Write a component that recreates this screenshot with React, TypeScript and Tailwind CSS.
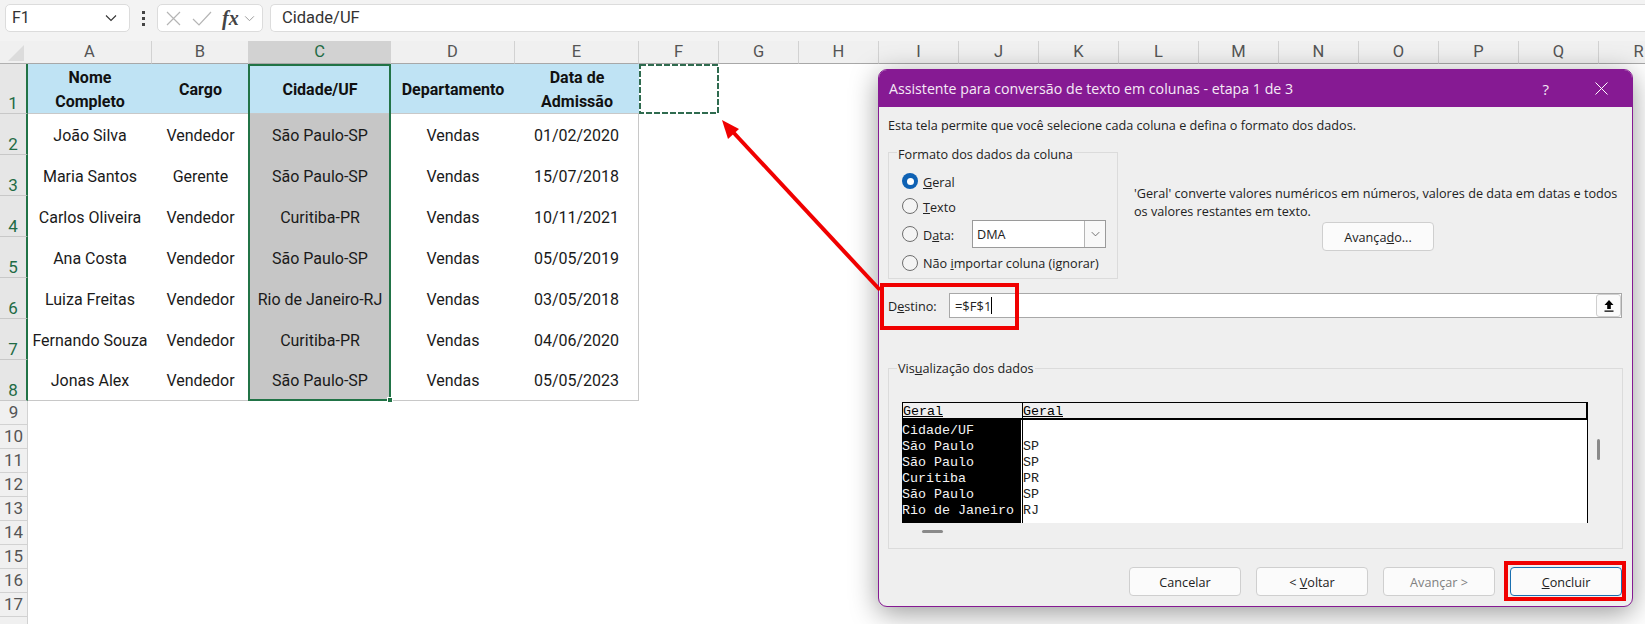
import React from "react";

const rows = [
  ["João Silva", "Vendedor", "São Paulo-SP", "Vendas", "01/02/2020"],
  ["Maria Santos", "Gerente", "São Paulo-SP", "Vendas", "15/07/2018"],
  ["Carlos Oliveira", "Vendedor", "Curitiba-PR", "Vendas", "10/11/2021"],
  ["Ana Costa", "Vendedor", "São Paulo-SP", "Vendas", "05/05/2019"],
  ["Luiza Freitas", "Vendedor", "Rio de Janeiro-RJ", "Vendas", "03/05/2018"],
  ["Fernando Souza", "Vendedor", "Curitiba-PR", "Vendas", "04/06/2020"],
  ["Jonas Alex", "Vendedor", "São Paulo-SP", "Vendas", "05/05/2023"],
];
const head = [["Nome", "Completo"], ["Cargo"], ["Cidade/UF"], ["Departamento"], ["Data de", "Admissão"]];
const letters = "ABCDEFGHIJKLMNOPQR".split("");
const smallRows = [9, 10, 11, 12, 13, 14, 15, 16, 17];

function Radio({ on }: { on?: boolean }) {
  return on ? (
    <span className="flex h-4 w-4 shrink-0 items-center justify-center rounded-full bg-[#0f62b4]">
      <span className="h-[7px] w-[7px] rounded-full bg-white" />
    </span>
  ) : (
    <span className="h-4 w-4 shrink-0 rounded-full border border-[#6e6e6e] bg-[#f4f4f4]" />
  );
}

function Btn({ children, cls = "" }: { children: React.ReactNode; cls?: string }) {
  return (
    <div className={`flex h-[29px] w-[112px] items-center justify-center rounded-[4px] border border-[#cfcfcf] bg-[#fbfbfb] ${cls}`}>
      {children}
    </div>
  );
}

function Chevron({ cls = "" }: { cls?: string }) {
  return (
    <svg viewBox="0 0 12 8" className={cls} fill="none" stroke="currentColor" strokeWidth="1.1">
      <path d="M1 1.5 6 6.5 11 1.5" />
    </svg>
  );
}

export default function App() {
  return (
    <div className="relative h-[624px] w-[1645px] overflow-hidden bg-white font-['Roboto',sans-serif] text-[#1a1a1a]">
      {/* formula bar */}
      <div className="flex h-[41px] items-start bg-[#f3f3f3] pl-[5px] pt-1">
        <div className="flex h-[28px] w-[125px] items-center justify-between rounded-[5px] border border-[#dcdcdc] bg-white pl-1.5 pr-3 text-[16px] text-[#333]">
          F1
          <Chevron cls="h-[8px] w-[12px] text-[#333]" />
        </div>
        <div className="flex h-[28px] w-[27px] flex-col items-center justify-center gap-[3px]">
          <span className="h-[3px] w-[3px] bg-[#444]" />
          <span className="h-[3px] w-[3px] bg-[#444]" />
          <span className="h-[3px] w-[3px] bg-[#444]" />
        </div>
        <div className="flex h-[28px] w-[106px] items-center rounded-[5px] border border-[#dcdcdc] bg-white pl-2">
          <svg viewBox="0 0 15 15" className="h-[15px] w-[15px] text-[#b5b5b5]" fill="none" stroke="currentColor" strokeWidth="1.2">
            <path d="M1 1 14 14M14 1 1 14" />
          </svg>
          <svg viewBox="0 0 20 15" className="ml-[11px] h-[15px] w-[20px] text-[#b5b5b5]" fill="none" stroke="currentColor" strokeWidth="1.2">
            <path d="M1 8 7 14 19 1" />
          </svg>
          <span className="ml-[10px] font-['Liberation_Serif',serif] text-[20px] font-bold italic leading-none text-[#444]">fx</span>
          <Chevron cls="ml-[5px] h-[7px] w-[11px] text-[#999]" />
        </div>
        <div className="ml-[7px] flex h-[28px] flex-1 items-center rounded-l-[5px] border-y border-l border-[#dcdcdc] bg-white pl-[11px] text-[16.5px] text-[#333]">
          Cidade/UF
        </div>
      </div>

      {/* sheet */}
      <div className="grid grid-cols-[28px_124px_97px_142px_124px_124px_80px_80px_80px_80px_80px_80px_80px_80px_80px_80px_80px_80px_80px] grid-rows-[23px_50px_41px_41px_41px_41px_41px_41px_41px_24px_24px_24px_24px_24px_24px_24px_24px_24px_24px]">
        <div className="relative border-b border-[#b0b0b0] bg-[#f0f0f0]">
          <svg viewBox="0 0 16 16" className="absolute left-[8px] top-[4px] h-4 w-4 text-[#dcdcdc]" fill="currentColor">
            <path d="M16 0V16H0Z" />
          </svg>
        </div>
        {letters.map((l) => (
          <div
            key={l}
            className={`flex items-center justify-center border-b border-r border-[#d2d2d2] border-b-[#a8a8a8] text-[16.5px] ${
              l === "C" ? "bg-[#d2d2d2] text-[#1f6b45]" : "bg-[#f0f0f0] text-[#555]"
            }`}
          >
            {l}
          </div>
        ))}

        {/* row 1 */}
        <div className="flex items-end justify-center border-b border-r-2 border-[#c8c8c8] border-r-[#217346] bg-[#e6e6e6] text-[17px] leading-[20px] text-[#1f6b45]">1</div>
        {head.map((h, i) => (
          <div
            key={i}
            style={{ gridRowStart: 2, gridColumnStart: i + 2 }}
            className="flex flex-col items-center justify-center border-b border-[#c8c8c8] bg-[#bfe3f4] pt-[2px] text-[16px] font-bold leading-[24px] text-[#111]"
          >
            {h.map((t) => (
              <span key={t}>{t}</span>
            ))}
          </div>
        ))}
        <div className="col-start-7 row-start-2">
          <svg viewBox="0 0 80 50" className="h-full w-full">
            <rect x="1" y="1" width="78" height="48" fill="none" stroke="#2f6b4f" strokeWidth="2" strokeDasharray="6 2" />
          </svg>
        </div>

        {/* rows 2–8 */}
        {rows.map((r, i) => (
          <React.Fragment key={i}>
            <div
              style={{ gridRowStart: i + 3, gridColumnStart: 1 }}
              className="flex items-end justify-center border-b border-r-2 border-[#c8c8c8] border-r-[#217346] bg-[#e6e6e6] text-[17px] leading-[20px] text-[#1f6b45]"
            >
              {i + 2}
            </div>
            {r.map((c, j) => (
              <div
                key={j}
                style={{ gridRowStart: i + 3, gridColumnStart: j + 2 }}
                className={`flex items-center justify-center whitespace-nowrap pt-[2px] text-[16px] ${j === 2 ? "bg-[#c6c6c6]" : ""} ${
                  i === 6 ? "border-b border-[#c8c8c8]" : ""
                } ${j === 4 ? "border-r border-[#c8c8c8]" : ""}`}
              >
                {c}
              </div>
            ))}
          </React.Fragment>
        ))}

        {/* selection outline of column C */}
        <div className="relative col-start-4 row-span-8 row-start-2 -ml-[1px] border-2 border-[#217346]">
          <span className="absolute -bottom-[4px] -right-[4px] h-[6px] w-[6px] border border-white bg-[#217346]" />
        </div>

        {/* rows 9–17 */}
        {smallRows.map((n) => (
          <div
            key={n}
            style={{ gridRowStart: n + 1, gridColumnStart: 1 }}
            className="flex items-center justify-center border-b border-r border-[#d2d2d2] bg-[#f0f0f0] text-[17px] text-[#555]"
          >
            {n}
          </div>
        ))}
        <div className="col-start-1 row-start-[19] border-r border-[#d2d2d2] bg-[#f0f0f0]" />
      </div>

      {/* dialog */}
      <div className="absolute left-[878px] top-[69px] flex h-[538px] w-[755px] flex-col overflow-hidden rounded-[9px] border border-[#861a93] bg-[#efefef] font-['Open_Sans',sans-serif] text-[12.65px] leading-[18px] text-[#222] shadow-[0_6px_28px_rgba(0,0,0,0.4)]">
        <div className="-mt-px flex h-[38px] shrink-0 items-center bg-[#861a93] pl-[10px] pt-px text-[14.2px] text-[#f5eaf6]">
          <span>Assistente para conversão de texto em colunas - etapa 1 de 3</span>
          <span className="ml-auto text-[15px]">?</span>
          <svg viewBox="0 0 13 13" className="ml-[46px] mr-[24px] h-[13px] w-[13px] text-white" fill="none" stroke="currentColor" strokeWidth="1">
            <path d="M.5.5 12.5 12.5M12.5.5.5 12.5" />
          </svg>
        </div>

        <div className="flex flex-1 flex-col pl-[9px] pr-[10px] pt-[9px]">
          <div className="h-[18px]">Esta tela permite que você selecione cada coluna e defina o formato dos dados.</div>

          <div className="mt-[18px] flex h-[127px]">
            <div className="relative h-[127px] w-[230px] shrink-0 border border-[#dbdbdb] pl-[13px] pr-[11px] pt-[20px]">
              <span className="absolute -top-[8px] left-[8px] bg-[#efefef] px-px">Formato dos dados da coluna</span>
              <div className="flex h-4 items-center gap-[5px]">
                <Radio on />
                <span className="mt-[1px]"><u>G</u>eral</span>
              </div>
              <div className="mt-[9px] flex h-4 items-center gap-[5px]">
                <Radio />
                <span className="mt-[1px]"><u>T</u>exto</span>
              </div>
              <div className="mt-[6px] flex h-[28px] items-center gap-[5px]">
                <Radio />
                <span className="mt-[1px]">D<u>a</u>ta:</span>
                <div className="ml-auto flex h-[28px] w-[134px] items-center border border-[#9a9a9a] bg-white pl-[4px]">
                  DMA
                  <span className="ml-auto flex h-[26px] w-[21px] items-center justify-center border-l border-[#b5b5b5] bg-[#f8f8f8]">
                    <Chevron cls="h-[6px] w-[9px] text-[#555]" />
                  </span>
                </div>
              </div>
              <div className="mt-[7px] flex h-4 items-center gap-[5px]">
                <Radio />
                <span className="whitespace-nowrap">Não <u>i</u>mportar coluna (ignorar)</span>
              </div>
            </div>
            <div className="ml-[16px] mt-[32px] flex flex-col">
              <div className="whitespace-nowrap">
                'Geral' converte valores numéricos em números, valores de data em datas e todos
                <br />
                os valores restantes em texto.
              </div>
              <Btn cls="ml-[188px] mt-[2px]">
                <span>Avança<u>d</u>o...</span>
              </Btn>
            </div>
          </div>

          <div className="mt-[14px] flex h-[25px] items-center">
            <span className="mt-[1px] w-[61px]">D<u>e</u>stino:</span>
            <div className="flex h-[25px] w-[674px] items-center border border-[#a8a8a8] bg-white pl-[5px]">
              <span className="text-[13px]">=$F$1</span>
              <span className="h-[17px] w-px bg-black" />
              <span className="ml-auto flex h-[23px] w-[25px] items-center justify-center rounded-[3px] border border-[#cfcfcf] bg-[#fbfbfb]">
                <svg viewBox="0 0 10 12" className="h-[12px] w-[10px] text-black" fill="currentColor">
                  <path d="M5 0 9.5 5H6.8V9H3.2V5H.5ZM.5 10.4H9.5V11.8H.5Z" />
                </svg>
              </span>
            </div>
          </div>

          <div className="relative mt-[50px] h-[181px] w-[735px] border border-[#dbdbdb] pl-[13px] pt-[33px]">
            <span className="absolute -top-[10px] left-[8px] bg-[#efefef] px-px">Vis<u>u</u>alização dos dados</span>
            <div className="flex items-start">
              <div className="h-[121px] w-[686px] font-['Liberation_Mono',monospace] text-[13.33px] leading-[16px]">
                <div className="flex h-[18px] border-b-2 border-l border-r-2 border-t border-black text-black">
                  <div className="h-full w-[120px] border-r border-black pt-[1px] underline">Geral</div>
                  <div className="h-full flex-1 pt-[1px] underline">Geral</div>
                </div>
                <div className="flex h-[103px] bg-white">
                  <div className="w-[119px] bg-black pt-[3px] text-[#f4f4f4]">
                    <div>Cidade/UF</div>
                    <div>São Paulo</div>
                    <div>São Paulo</div>
                    <div>Curitiba</div>
                    <div>São Paulo</div>
                    <div>Rio de Janeiro</div>
                  </div>
                  <div className="ml-px flex-1 border-l border-r border-black pt-[3px] text-[#222]">
                    <div>&nbsp;</div>
                    <div>SP</div>
                    <div>SP</div>
                    <div>PR</div>
                    <div>SP</div>
                    <div>RJ</div>
                  </div>
                </div>
              </div>
              <span className="ml-[9px] mt-[37px] h-[21px] w-[3px] rounded-full bg-[#8a8a8a]" />
            </div>
            <div className="ml-[20px] mt-[7px] h-[3px] w-[21px] rounded-full bg-[#8a8a8a]" />
          </div>

          <div className="mt-[18px] flex justify-end gap-[15px]">
            <Btn>Cancelar</Btn>
            <Btn>
              <span>&lt; <u>V</u>oltar</span>
            </Btn>
            <Btn cls="text-[#808080]">Avançar &gt;</Btn>
            <Btn cls="!border-[#1a6fb0]">
              <span><u>C</u>oncluir</span>
            </Btn>
          </div>
        </div>
      </div>

      {/* red annotations */}
      <div className="absolute left-[880px] top-[283px] h-[47px] w-[139px] border-4 border-[#f00000]" />
      <div className="absolute left-[1504px] top-[561px] h-[40px] w-[122px] border-4 border-[#f00000]" />
      <svg className="pointer-events-none absolute left-0 top-0 h-[624px] w-[1645px]" viewBox="0 0 1645 624">
        <path d="M880 290 733 132" stroke="#f00000" strokeWidth="4" fill="none" />
        <path d="M722 120 739 129 728 139Z" fill="#f00000" />
      </svg>
    </div>
  );
}
